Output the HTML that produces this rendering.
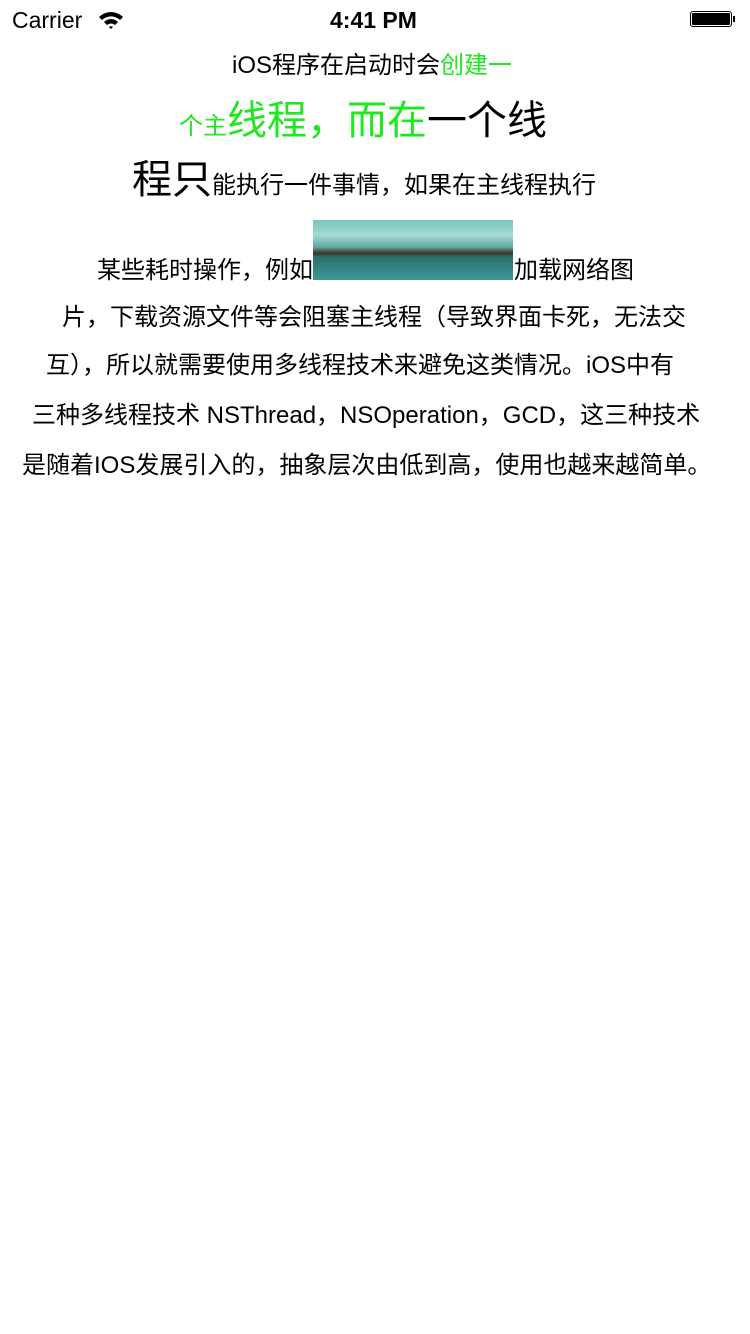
<!DOCTYPE html>
<html><head><meta charset="utf-8"><style>
body{margin:0;width:750px;height:1334px;background:#fff;position:relative;overflow:hidden;font-family:"Liberation Sans","Noto Sans CJK SC",sans-serif;color:#000}
.l{position:absolute;white-space:nowrap;font-size:24px;line-height:1}
.g{color:#1ee81e}
.b{font-size:40px}
</style></head><body>
<div class="l" style="left:12px;top:9px;font-size:23px">Carrier</div>
<svg style="position:absolute;left:98px;top:10px" width="26" height="20" viewBox="0 0 26 20"><path d="M1 7 A17 17 0 0 1 25 7 L22 10 A13 13 0 0 0 4 10Z M6 12 A10 10 0 0 1 20 12 L17 15 A6 6 0 0 0 9 15Z M11 17 L13 19 L15 17 A3 3 0 0 0 11 17Z" fill="#000"/></svg>
<div class="l" style="left:330px;top:9px;font-size:23px;font-weight:bold">4:41 PM</div>
<div style="position:absolute;left:690px;top:11px;width:42px;height:16px;border:1.5px solid #000;border-radius:3px;box-sizing:border-box;padding:1px"><div style="background:#000;width:100%;height:100%;border-radius:1px"></div></div>
<div style="position:absolute;left:733px;top:16px;width:2px;height:6px;background:#000"></div>

<div class="l" style="left:232px;top:54px">iOS程序在启动时会<span class="g">创建一</span></div>
<div class="l" style="left:179px;top:101px"><span class="g">个主<span class="b">线程，而在</span></span><span class="b">一个线</span></div>
<div class="l" style="left:132px;top:160px"><span class="b">程只</span>能执行一件事情，如果在主线程执行</div>
<div class="l" style="left:97px;top:259px">某些耗时操作，例如</div>
<div style="position:absolute;left:313px;top:220px;width:200px;height:60px;background:linear-gradient(180deg,#7cc4bf 0%,#a6d9d2 25%,#5fa9a4 45%,#3d3622 55%,#2b6f6e 62%,#3e9a9a 100%)"></div>
<div class="l" style="left:514px;top:259px">加载网络图</div>
<div class="l" style="left:62px;top:306px">片，下载资源文件等会阻塞主线程（导致界面卡死，无法交</div>
<div class="l" style="left:46px;top:354px">互），所以就需要使用多线程技术来避免这类情况。iOS中有</div>
<div class="l" style="left:32px;top:404px">三种多线程技术 NSThread，NSOperation，GCD，这三种技术</div>
<div class="l" style="left:22px;top:454px">是随着IOS发展引入的，抽象层次由低到高，使用也越来越简单。</div>
</body></html>
